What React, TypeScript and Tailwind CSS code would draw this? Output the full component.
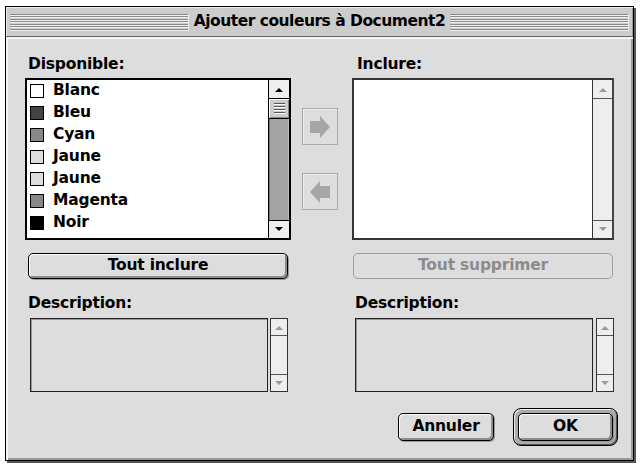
import React from "react";

const font = "font-['DejaVu_Sans','Verdana',sans-serif] font-bold tracking-[-0.2px]";

const colors = [
  { name: "Blanc", fill: "#ffffff" },
  { name: "Bleu", fill: "#444444" },
  { name: "Cyan", fill: "#888888" },
  { name: "Jaune", fill: "#dddddd" },
  { name: "Jaune", fill: "#dddddd" },
  { name: "Magenta", fill: "#888888" },
  { name: "Noir", fill: "#000000" },
];

function Tri({ up, color }: { up?: boolean; color: string }) {
  return (
    <svg width="8" height="5" viewBox="0 0 8 5">
      <path d={up ? "M0 5 L4 1 L8 5 Z" : "M0 0 L8 0 L4 4 Z"} fill={color} />
    </svg>
  );
}

function Stripes() {
  return (
    <div className="flex-1 h-[17px] mt-[1px] border-r border-b border-[#eeeeee] border-l-[#888] border-t-[#888] bg-[repeating-linear-gradient(to_bottom,#8a8a8a_0px,#8a8a8a_1px,#f0f0f0_1px,#f0f0f0_2px,#cccccc_2px,#cccccc_2.5px)]" />
  );
}

function ArrowBox({ dir }: { dir: "right" | "left" }) {
  return (
    <div className="w-[36px] h-[37px] border border-[#aaaaaa] shadow-[inset_1px_1px_0_#eeeeee] flex items-center justify-center">
      <svg width="24" height="24" viewBox="0 0 24 24">
        {dir === "right" ? (
          <path d="M2 6 H12 V1 L22 12 L12 23 V18 H2 Z" fill="#a6a6a6" />
        ) : (
          <path d="M22 6 H12 V1 L2 12 L12 23 V18 H22 Z" fill="#a6a6a6" />
        )}
      </svg>
    </div>
  );
}

function Button({
  children,
  disabled,
  className = "",
}: {
  children: React.ReactNode;
  disabled?: boolean;
  className?: string;
}) {
  return (
    <div
      className={`${font} text-[15.5px] leading-none flex items-center justify-center rounded-[5px] border ${
        disabled
          ? "border-[#a0a0a0] text-[#8c8c8c] bg-[#dddddd]"
          : "border-black text-black bg-[#dddddd] shadow-[inset_1px_1px_0_#ffffff,inset_-2px_-2px_0_#8c8c8c,1px_1px_0_#999]"
      } ${className}`}
    >
      {children}
    </div>
  );
}

function SmallScroll() {
  return (
    <div className="w-[18px] h-[74px] border border-[#333] bg-[#eeeeee] flex flex-col">
      <div className="h-[17px] border-b border-[#555] flex items-center justify-center">
        <Tri up color="#9a9a9a" />
      </div>
      <div className="flex-1" />
      <div className="h-[17px] border-t border-[#555] flex items-center justify-center">
        <Tri color="#9a9a9a" />
      </div>
    </div>
  );
}

export default function App() {
  return (
    <div className="w-[642px] h-[468px] bg-white pt-[6px] pl-[5px]">
      <div className="w-[629px] h-[455px] border border-black bg-[#dddddd] shadow-[2px_2px_0_#555] flex flex-col">
        {/* title bar */}
        <div className="h-[30px] bg-[#cccccc] border-b border-[#666] shadow-[inset_1px_1px_0_#eeeeee,inset_-1px_0_0_#999] flex items-center px-[4px] gap-[4px]">
          <Stripes />
          <div className={`${font} text-[15.5px] leading-none text-black px-[1px] tracking-[-0.5px]`}>
            Ajouter couleurs à Document2
          </div>
          <Stripes />
        </div>

        {/* content */}
        <div className="flex-1 shadow-[inset_2px_2px_0_#f4f4f4,inset_-2px_-2px_0_#999] pl-[19px] flex flex-col">
          <div className="flex">
            {/* left column */}
            <div className="w-[266px] flex flex-col">
              <div className={`${font} text-[15.5px] leading-[18px] mt-[18px] h-[23px] pl-[3px]`}>Disponible:</div>
              <div className="h-[162px] border-2 border-black bg-white flex">
                <div className="flex-1 flex flex-col pl-[3px]">
                  {colors.map((c, i) => (
                    <div key={i} className="h-[22px] flex items-center gap-[9px]">
                      <div className="w-[14px] h-[14px] border border-black" style={{ background: c.fill }} />
                      <span className={`${font} text-[15.5px] leading-none`}>{c.name}</span>
                    </div>
                  ))}
                </div>
                <div className="w-[21px] border-l border-black flex flex-col">
                  <div className="h-[19px] border-b border-black bg-[#eeeeee] flex items-center justify-center">
                    <Tri up color="#000" />
                  </div>
                  <div className="h-[20px] border-b border-black bg-[#cccccc] shadow-[inset_1px_1px_0_#fff,inset_-1px_-1px_0_#888] flex flex-col items-center justify-center gap-[1px]">
                    {[0, 1, 2, 3].map((k) => (
                      <div key={k} className="w-[11px] h-[2px] border-t border-[#555] border-b-[1px] border-b-white" />
                    ))}
                  </div>
                  <div className="flex-1 bg-[#a3a3a3] shadow-[inset_1px_0_0_#777,inset_-1px_0_0_#bbb]" />
                  <div className="h-[18px] border-t border-black bg-[#eeeeee] flex items-center justify-center">
                    <Tri color="#000" />
                  </div>
                </div>
              </div>
              <Button className="mt-[13px] mx-[3px] h-[26px]">Tout inclure</Button>
              <div className={`${font} text-[15.5px] leading-[18px] mt-[15px] h-[24px] pl-[3px]`}>Description:</div>
              <div className="flex gap-[2px] pl-[5px]">
                <div className="w-[238px] h-[74px] border border-[#222] shadow-[inset_1px_1px_0_#999]" />
                <SmallScroll />
              </div>
            </div>

            {/* middle column */}
            <div className="ml-[11px] w-[36px] flex flex-col gap-[28px] pt-[71px]">
              <ArrowBox dir="right" />
              <ArrowBox dir="left" />
            </div>

            {/* right column */}
            <div className="ml-[14px] w-[262px] flex flex-col">
              <div className={`${font} text-[15.5px] leading-[18px] mt-[18px] h-[23px] pl-[5px]`}>Inclure:</div>
              <div className="h-[162px] border-2 border-[#333] border-r-[#444] bg-white flex">
                <div className="flex-1" />
                <div className="w-[20px] border-l border-[#333] bg-[#eeeeee] flex flex-col">
                  <div className="h-[19px] border-b border-[#555] flex items-center justify-center">
                    <Tri up color="#9a9a9a" />
                  </div>
                  <div className="flex-1" />
                  <div className="h-[18px] border-t border-[#555] flex items-center justify-center">
                    <Tri color="#9a9a9a" />
                  </div>
                </div>
              </div>
              <Button disabled className="mt-[13px] ml-[1px] mr-[1px] h-[26px]">Tout supprimer</Button>
              <div className={`${font} text-[15.5px] leading-[18px] mt-[15px] h-[24px] pl-[3px]`}>Description:</div>
              <div className="flex gap-[3px] pl-[3px]">
                <div className="w-[238px] h-[74px] border border-[#222] shadow-[inset_1px_1px_0_#999]" />
                <SmallScroll />
              </div>
            </div>
          </div>

          {/* bottom buttons */}
          <div className="flex justify-end items-center pr-[15px] mt-[16px] gap-[19px]">
            <Button className="w-[96px] h-[28px]">Annuler</Button>
            <div className="w-[105px] h-[38px] rounded-[8px] border border-black bg-[#aaaaaa] shadow-[inset_1px_1px_0_#eee,inset_-1px_-1px_0_#555] p-[4px] flex">
              <Button className="flex-1">OK</Button>
            </div>
          </div>
        </div>
      </div>
    </div>
  );
}
